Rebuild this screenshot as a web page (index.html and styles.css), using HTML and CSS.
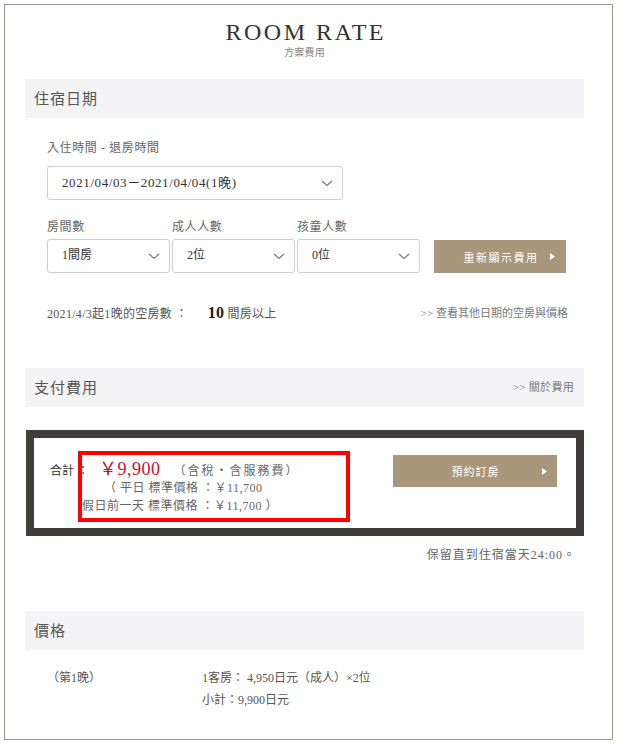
FILE: index.html
```html
<!DOCTYPE html>
<html lang="zh-Hant">
<head>
<meta charset="utf-8">
<title>ROOM RATE</title>
<link rel="stylesheet" href="styles.css">
</head>
<body>
<div class="frame">
  <header class="head">
    <h1 class="title">ROOM RATE</h1>
    <div class="subtitle">方案費用</div>
  </header>

  <div class="band band-first"><h2 class="band-title">住宿日期</h2></div>
  <div class="field-label date-label">入住時間 - 退房時間</div>
  <div class="select select-date">
    <span class="select-value date-value">2021/04/03－2021/04/04(1晚)</span>
    <svg class="chev" width="12" height="7" viewBox="0 0 12 7"><path d="M1 1 L6 5.5 L11 1" fill="none" stroke="#777" stroke-width="1.2"/></svg>
  </div>

  <div class="row">
    <div class="col">
      <div class="field-label">房間數</div>
      <div class="select select-small">
        <span class="select-value">1間房</span>
        <svg class="chev" width="12" height="7" viewBox="0 0 12 7"><path d="M1 1 L6 5.5 L11 1" fill="none" stroke="#777" stroke-width="1.2"/></svg>
      </div>
    </div>
    <div class="col">
      <div class="field-label">成人人數</div>
      <div class="select select-small">
        <span class="select-value">2位</span>
        <svg class="chev" width="12" height="7" viewBox="0 0 12 7"><path d="M1 1 L6 5.5 L11 1" fill="none" stroke="#777" stroke-width="1.2"/></svg>
      </div>
    </div>
    <div class="col">
      <div class="field-label">孩童人數</div>
      <div class="select select-small">
        <span class="select-value">0位</span>
        <svg class="chev" width="12" height="7" viewBox="0 0 12 7"><path d="M1 1 L6 5.5 L11 1" fill="none" stroke="#777" stroke-width="1.2"/></svg>
      </div>
    </div>
    <button class="btn btn-refresh"><span>重新顯示費用</span><svg class="tri" width="5" height="7" viewBox="0 0 5 7"><path d="M0 0 L5 3.5 L0 7 Z" fill="#fff"/></svg></button>
  </div>

  <div class="avail">
    <div class="avail-left">2021/4/3起1晚的空房數 ：<strong class="avail-num">10</strong>間房以上</div>
    <a class="link">&gt;&gt; 查看其他日期的空房與價格</a>
  </div>

  <div class="band band-pay">
    <h2 class="band-title">支付費用</h2>
    <a class="band-link">&gt;&gt; 關於費用</a>
  </div>

  <div class="total-box">
    <div class="total-info">
      <div class="total-line1"><span class="total-label">合計 ：</span><span class="total-price">￥9,900</span><span class="total-note">（含稅・含服務費）</span></div>
      <div class="total-line2">（ 平日 標準價格 ：￥11,700</div>
      <div class="total-line3">假日前一天 標準價格 ：￥11,700 ）</div>
    </div>
    <button class="btn btn-book"><span>預約訂房</span><svg class="tri" width="5" height="7" viewBox="0 0 5 7"><path d="M0 0 L5 3.5 L0 7 Z" fill="#fff"/></svg></button>
    <div class="highlight"></div>
  </div>

  <div class="keep">保留直到住宿當天24:00。</div>

  <div class="band band-price"><h2 class="band-title">價格</h2></div>
  <div class="price-grid">
    <div class="price-night">（第1晚）</div>
    <div class="price-detail">1客房： 4,950日元（成人）×2位</div>
    <div></div>
    <div class="price-detail">小計：9,900日元</div>
  </div>
</div>
</body>
</html>
```

FILE: styles.css
```css
* { box-sizing: border-box; margin: 0; padding: 0; }
body {
  margin: 0;
  background: #fff;
  font-family: "Liberation Serif", "Noto Sans CJK TC", serif;
  color: #555;
  line-height: 1.3;
}
.frame {
  margin: 4px 0 0 4px;
  width: 609px;
  height: 736px;
  border: 1px solid #8c9c8a;
  padding: 0 28px 0 20px;
}
.head { text-align: center; padding-top: 14px; }
.title {
  font-weight: normal;
  font-size: 24px;
  line-height: 26px;
  letter-spacing: 2.5px;
  padding-left: 2.5px;
  color: #333;
}
.subtitle {
  margin-top: 1px;
  font-size: 10px;
  line-height: 14px;
  color: #888;
  letter-spacing: 0.3px;
}
.band {
  height: 39px;
  background: #f4f3f5;
  display: flex;
  align-items: center;
  justify-content: space-between;
  padding: 0 10px 0 9px;
}
.band-first { margin-top: 19px; }
.band-pay { margin-top: 45px; }
.band-price { margin-top: 48px; }
.band-title {
  font-weight: normal;
  font-size: 15px;
  line-height: 20px;
  letter-spacing: 1px;
  color: #555;
}
.band-link {
  font-size: 11px;
  color: #777;
  letter-spacing: 0.3px;
}
.field-label {
  font-size: 12px;
  line-height: 16px;
  letter-spacing: 0.6px;
  color: #666;
}
.date-label { margin: 22px 0 0 22px; }
.select {
  height: 34px;
  border: 1px solid #cfcfcf;
  border-radius: 3px;
  background: #fff;
  display: flex;
  align-items: center;
  justify-content: space-between;
  padding: 0 9px 0 14px;
}
.select-date {
  width: 296px;
  margin: 10px 0 0 22px;
}
.select-value { font-size: 12px; color: #333; }
.date-value { font-size: 13px; letter-spacing: 0.6px; }
.chev { display: block; }
.row {
  display: flex;
  align-items: flex-end;
  gap: 2px;
  margin-top: 19px;
  padding-left: 22px;
}
.col { width: 123px; }
.select-small { margin-top: 4px; }
.btn {
  border: none;
  background: #a8977a;
  color: #fff;
  font-family: inherit;
  font-size: 11px;
  letter-spacing: 1.5px;
  display: flex;
  align-items: center;
  justify-content: center;
}
.btn-refresh {
  width: 132px;
  height: 33px;
  margin: 0 0 0 12px;
  padding-left: 18px;
  align-self: flex-end;
}
.btn-refresh .tri { margin-left: 11px; }
.avail {
  margin-top: 30px;
  padding: 0 16px 0 22px;
  display: flex;
  justify-content: space-between;
  align-items: center;
  height: 20px;
}
.avail-left {
  font-size: 12px;
  color: #555;
  letter-spacing: 0.3px;
  display: flex;
  align-items: baseline;
}
.avail-num {
  font-size: 16px;
  color: #222;
  margin: 0 3px 0 20px;
}
.link { font-size: 11px; color: #777; }
.total-box {
  position: relative;
  margin: 23px 0 0 1px;
  height: 106px;
  border: 8px solid #413d3b;
  display: flex;
  justify-content: space-between;
  align-items: flex-start;
  padding: 17px 19px 0 16px;
}
.total-info { margin-top: 4px; }
.total-line1 {
  display: flex;
  align-items: baseline;
  height: 20px;
  line-height: 20px;
}
.total-label { font-size: 12px; color: #333; line-height: 20px; }
.total-price {
  font-size: 18px;
  line-height: 20px;
  color: #c8102e;
  letter-spacing: 0.5px;
  margin-left: 10px;
}
.total-note {
  font-size: 12px;
  line-height: 20px;
  letter-spacing: 2px;
  color: #666;
  margin-left: 13px;
}
.total-line2, .total-line3 {
  font-size: 12px;
  line-height: 18px;
  color: #666;
  letter-spacing: 0.5px;
}
.total-line2 { padding-left: 54px; }
.total-line3 { padding-left: 32px; }
.btn-book {
  width: 164px;
  height: 32px;
  letter-spacing: 1px;
  padding-left: 48px;
}
.btn-book .tri { margin-left: 42px; }
.highlight {
  position: absolute;
  left: 44px;
  top: 13px;
  width: 272px;
  height: 71px;
  border: 4px solid #ff0000;
}
.keep {
  margin-top: 11px;
  text-align: right;
  padding-right: 8px;
  font-size: 12px;
  line-height: 16px;
  letter-spacing: 1px;
  color: #666;
}
.price-grid {
  display: grid;
  grid-template-columns: 155px 1fr;
  margin-top: 17px;
  padding-left: 22px;
  font-size: 12px;
  line-height: 22px;
  color: #555;
}
```
